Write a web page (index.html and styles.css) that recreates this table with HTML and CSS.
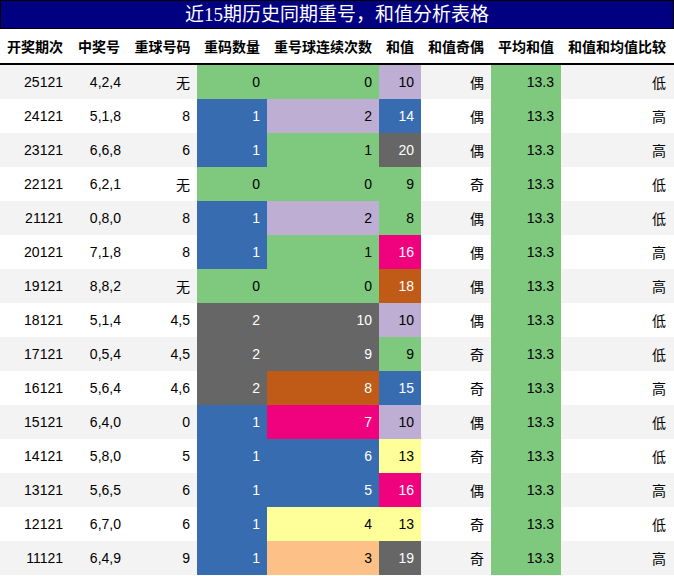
FILE: index.html
```html
<!DOCTYPE html>
<html lang="zh">
<head>
<meta charset="utf-8">
<link rel="stylesheet" href="styles.css">
</head>
<body>
<div class="sheet">
  <div class="title">近15期历史同期重号，和值分析表格</div>
  <div class="grid head">
    <div>开奖期次</div><div>中奖号</div><div>重球号码</div><div>重码数量</div><div>重号球连续次数</div><div>和值</div><div>和值奇偶</div><div>平均和值</div><div>和值和均值比较</div>
  </div>
  <div class="body">
    <div class="grid row odd"><div>25121</div><div>4,2,4</div><div>无</div><div class="c-green">0</div><div class="c-green">0</div><div class="c-lav">10</div><div>偶</div><div class="c-green">13.3</div><div>低</div></div>
    <div class="grid row"><div>24121</div><div>5,1,8</div><div>8</div><div class="c-blue">1</div><div class="c-lav">2</div><div class="c-blue">14</div><div>偶</div><div class="c-green">13.3</div><div>高</div></div>
    <div class="grid row odd"><div>23121</div><div>6,6,8</div><div>6</div><div class="c-blue">1</div><div class="c-green">1</div><div class="c-gray">20</div><div>偶</div><div class="c-green">13.3</div><div>高</div></div>
    <div class="grid row"><div>22121</div><div>6,2,1</div><div>无</div><div class="c-green">0</div><div class="c-green">0</div><div class="c-green">9</div><div>奇</div><div class="c-green">13.3</div><div>低</div></div>
    <div class="grid row odd"><div>21121</div><div>0,8,0</div><div>8</div><div class="c-blue">1</div><div class="c-lav">2</div><div class="c-green">8</div><div>偶</div><div class="c-green">13.3</div><div>低</div></div>
    <div class="grid row"><div>20121</div><div>7,1,8</div><div>8</div><div class="c-blue">1</div><div class="c-green">1</div><div class="c-pink">16</div><div>偶</div><div class="c-green">13.3</div><div>高</div></div>
    <div class="grid row odd"><div>19121</div><div>8,8,2</div><div>无</div><div class="c-green">0</div><div class="c-green">0</div><div class="c-brown">18</div><div>偶</div><div class="c-green">13.3</div><div>高</div></div>
    <div class="grid row"><div>18121</div><div>5,1,4</div><div>4,5</div><div class="c-gray">2</div><div class="c-gray">10</div><div class="c-lav">10</div><div>偶</div><div class="c-green">13.3</div><div>低</div></div>
    <div class="grid row odd"><div>17121</div><div>0,5,4</div><div>4,5</div><div class="c-gray">2</div><div class="c-gray">9</div><div class="c-green">9</div><div>奇</div><div class="c-green">13.3</div><div>低</div></div>
    <div class="grid row"><div>16121</div><div>5,6,4</div><div>4,6</div><div class="c-gray">2</div><div class="c-brown">8</div><div class="c-blue">15</div><div>奇</div><div class="c-green">13.3</div><div>高</div></div>
    <div class="grid row odd"><div>15121</div><div>6,4,0</div><div>0</div><div class="c-blue">1</div><div class="c-pink">7</div><div class="c-lav">10</div><div>偶</div><div class="c-green">13.3</div><div>低</div></div>
    <div class="grid row"><div>14121</div><div>5,8,0</div><div>5</div><div class="c-blue">1</div><div class="c-blue">6</div><div class="c-yellow">13</div><div>奇</div><div class="c-green">13.3</div><div>低</div></div>
    <div class="grid row odd"><div>13121</div><div>5,6,5</div><div>6</div><div class="c-blue">1</div><div class="c-blue">5</div><div class="c-pink">16</div><div>偶</div><div class="c-green">13.3</div><div>高</div></div>
    <div class="grid row"><div>12121</div><div>6,7,0</div><div>6</div><div class="c-blue">1</div><div class="c-yellow">4</div><div class="c-yellow">13</div><div>奇</div><div class="c-green">13.3</div><div>低</div></div>
    <div class="grid row odd"><div>11121</div><div>6,4,9</div><div>9</div><div class="c-blue">1</div><div class="c-peach">3</div><div class="c-gray">19</div><div>奇</div><div class="c-green">13.3</div><div>高</div></div>
  </div>
</div>
</body>
</html>
```

FILE: styles.css
```css
html, body {
  margin: 0;
  padding: 0;
  background: #ffffff;
}
.sheet {
  width: 674px;
  font-family: "Liberation Sans", "Noto Sans CJK SC", sans-serif;
  font-size: 14px;
  color: #000;
}
.title {
  height: 27px;
  border: 1px solid #000;
  background: #000080;
  color: #fff;
  font-family: "Liberation Serif", "Noto Sans CJK SC", serif;
  font-size: 19px;
  line-height: 27px;
  text-align: center;
}
.grid {
  display: grid;
  grid-template-columns: 70px 58px 69px 70px 112px 42px 70px 70px 112px;
}
.head {
  height: 34px;
  border-bottom: 2px solid #000;
  font-family: "Noto Sans CJK SC", sans-serif;
  font-weight: bold;
  font-size: 14px;
}
.head > div {
  display: flex;
  align-items: center;
  justify-content: center;
  white-space: nowrap;
}
.row {
  height: 34px;
  background: #ffffff;
}
.row.odd {
  background: #f3f3f3;
}
.row > div {
  display: flex;
  align-items: center;
  justify-content: flex-end;
  padding-right: 7px;
}
.c-green { background: #7fc97f; }
.c-lav { background: #beaed4; }
.c-peach { background: #fdc086; }
.c-yellow { background: #ffff99; }
.c-blue { background: #386cb0; color: #fff; }
.c-pink { background: #f0027f; color: #fff; }
.c-brown { background: #bf5b17; color: #fff; }
.c-gray { background: #666666; color: #fff; }
```
